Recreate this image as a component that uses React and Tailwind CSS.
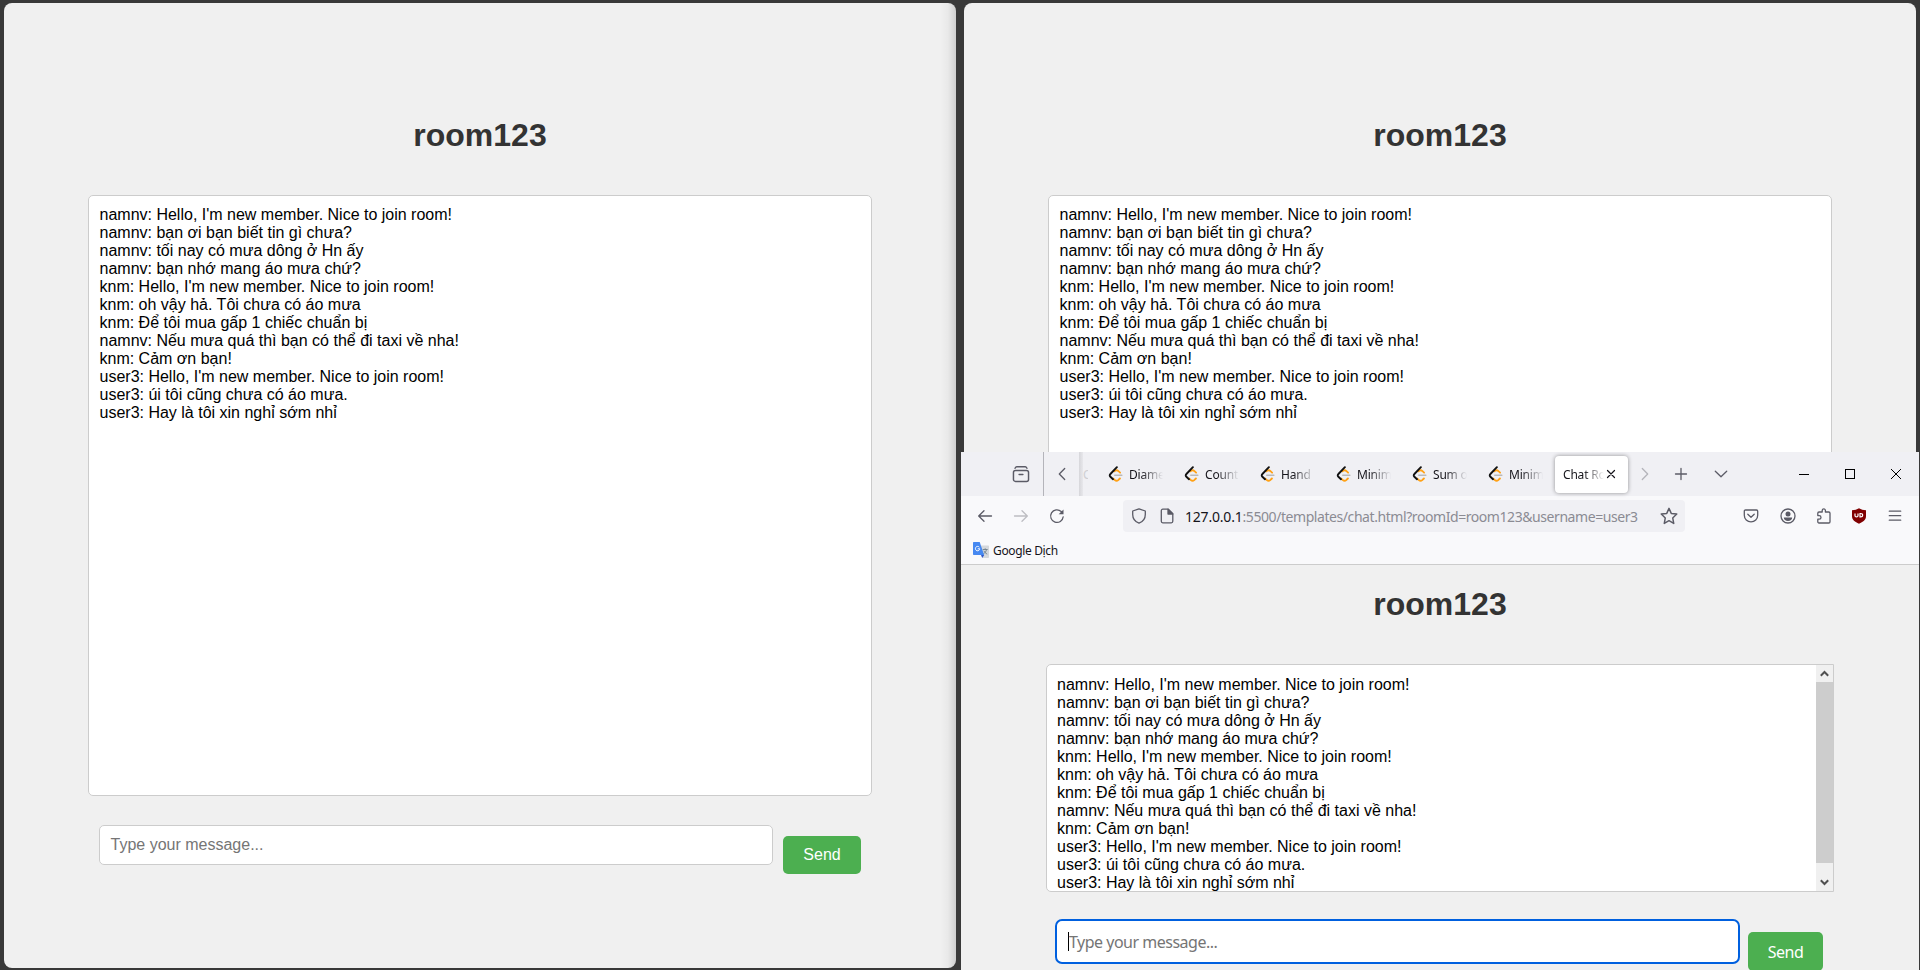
import React from "react";

const MESSAGES = [
  "namnv: Hello, I'm new member. Nice to join room!",
  "namnv: bạn ơi bạn biết tin gì chưa?",
  "namnv: tối nay có mưa dông ở Hn ấy",
  "namnv: bạn nhớ mang áo mưa chứ?",
  "knm: Hello, I'm new member. Nice to join room!",
  "knm: oh vậy hả. Tôi chưa có áo mưa",
  "knm: Để tôi mua gấp 1 chiếc chuẩn bị",
  "namnv: Nếu mưa quá thì bạn có thể đi taxi về nha!",
  "knm: Cảm ơn bạn!",
  "user3: Hello, I'm new member. Nice to join room!",
  "user3: úi tôi cũng chưa có áo mưa.",
  "user3: Hay là tôi xin nghỉ sớm nhỉ",
];

const TABS = ["Diame", "Count", "Hand", "Minim", "Sum o", "Minim"];

function Icon({ size = 16, className = "", children, width = 1.3 }) {
  return (
    <svg
      width={size}
      height={size}
      viewBox="0 0 16 16"
      fill="none"
      stroke="currentColor"
      strokeWidth={width}
      strokeLinecap="round"
      strokeLinejoin="round"
      className={"block shrink-0 " + className}
    >
      {children}
    </svg>
  );
}

function MessageList() {
  return (
    <div className="text-[16px] leading-[18px] text-black">
      {MESSAGES.map((m) => (
        <div key={m} className="whitespace-nowrap">
          {m}
        </div>
      ))}
    </div>
  );
}

function Title() {
  return <h1 className="text-center text-[32px] leading-[36px] font-bold text-[#333]">room123</h1>;
}

function ChatPanel({ shaded }) {
  return (
    <section className="relative h-[965px] w-[952px] overflow-hidden rounded-[8px] bg-[#f0f0f0] px-[84px] pt-[114px]">
      <Title />
      <div className="mt-[42px] h-[601px] rounded-[5px] border border-[#ccc] bg-white px-[10.5px] pt-[10px]">
        <MessageList />
      </div>
      <div className="mt-[29px] flex items-start gap-[10px] px-[11px]">
        <div className="h-[40px] w-[674px] rounded-[5px] border border-[#ccc] bg-white px-[10.5px] text-[16px] leading-[38px] text-[#757575]">
          Type your message...
        </div>
        <button className="mt-[11px] h-[38px] w-[78px] rounded-[5px] bg-[#4caf50] text-[16px] leading-[36px] text-white">
          Send
        </button>
      </div>
      {shaded && (
        <div className="absolute inset-y-0 right-0 w-[16px] bg-linear-to-r from-black/0 via-black/3 to-black/14" />
      )}
    </section>
  );
}

function LeetIcon() {
  return (
    <svg width="16" height="16" viewBox="0 0 16 16" fill="none" className="block shrink-0" strokeLinecap="round">
      <path d="M6.300 5.300 C7.600 4.100 9.300 4.100 10.500 5.200 L12.100 6.700" stroke="#ffa116" strokeWidth="1.800" />
      <path d="M5.300 12.600 L6.900 14.100 C7.900 15 9.200 15 10.200 14.100 L11.900 12.500" stroke="#ffa116" strokeWidth="1.900" />
      <path d="M6.800 9.300 H13.800" stroke="#b9b9b9" strokeWidth="1.600" />
      <path d="M8.900 1.200 L2.400 8 C1.500 8.900 1.500 9.900 2.400 10.800 L5 13.200" stroke="#111" strokeWidth="1.900" />
    </svg>
  );
}

function TabStrip() {
  return (
    <div className="flex h-[44px] items-center bg-[#f0f0f4] text-[#5b5b66]">
      <div className="flex h-full w-[83px] shrink-0 items-center justify-end border-r border-[#b4b4ba] pr-[13px]">
        <Icon size={18}>
          <path d="M2.700 2.900c.4-.8.8-1.400 1.500-1.400h7.600c.7 0 1.100.6 1.500 1.400" />
          <rect x="1.300" y="4.800" width="13.400" height="9.800" rx="1.800" />
          <path d="M6.300 8.400h3.400" />
        </Icon>
      </div>
      <div className="flex h-full w-[35px] shrink-0 items-center justify-center">
        <Icon size={16}>
          <path d="M10.700 2.500 5.300 8l5.400 5.500" />
        </Icon>
      </div>
      <div className="h-full w-[4px] shrink-0 bg-linear-to-r from-[#d6d6da] to-[#e8e8ec]" />
      <div className="w-[25px] shrink-0 pt-[2px] text-[12px] leading-[18px] text-[#cfcfd3]">
        <div className="w-[5px] overflow-hidden">C</div>
      </div>
      {TABS.map((t, i) => (
        <div key={i} className="flex w-[76px] shrink-0 items-center">
          <LeetIcon />
          <div className="ml-[5px] w-[34px] overflow-hidden pt-[2px] text-[12px] leading-[18px] tracking-[-0.2px] whitespace-nowrap text-[#15141a] [mask-image:linear-gradient(to_right,black_35%,transparent)]">
            {t}
          </div>
        </div>
      ))}
      <div className="-ml-[9px] flex h-[37px] w-[73px] shrink-0 items-center rounded-[4px] bg-white pl-[8px] text-[12px] text-[#15141a] shadow-[0_0_4px_rgba(0,0,0,0.4)]">
        <div className="w-[41px] overflow-hidden pt-[2px] leading-[18px] tracking-[-0.2px] whitespace-nowrap [mask-image:linear-gradient(to_right,black_50%,transparent)]">
          Chat Ro
        </div>
        <Icon size={14} width={1.4}>
          <path d="m4 4 8 8m0-8-8 8" />
        </Icon>
      </div>
      <Icon size={16} className="ml-[9px] text-[#b4b4ba]">
        <path d="M5.300 2.500 10.700 8l-5.400 5.500" />
      </Icon>
      <Icon size={16} className="ml-[19.500px]">
        <path d="M8 2.500v11M2.500 8h11" />
      </Icon>
      <Icon size={16} className="ml-[24.500px]">
        <path d="M2.300 5.300 8 10.700l5.700-5.400" />
      </Icon>
      <div className="ml-[70px] h-px w-[10px] shrink-0 bg-black" />
      <div className="ml-[36px] h-[10px] w-[10px] shrink-0 border border-black" />
      <svg width="10" height="10" viewBox="0 0 10 10" className="ml-[36px] block shrink-0 text-black">
        <path d="M0 0 10 10M10 0 0 10" stroke="currentColor" strokeWidth="1" />
      </svg>
    </div>
  );
}

function NavBar() {
  return (
    <div className="flex h-[40px] items-center bg-[#f9f9fb] text-[#5b5b66]">
      <Icon className="ml-[16px]">
        <path d="M14.500 8H2M7 2.700 1.700 8 7 13.300" />
      </Icon>
      <Icon className="ml-[20px] text-[#bdbdc2]">
        <path d="M1.500 8H14M9 2.700 14.300 8 9 13.300" />
      </Icon>
      <Icon className="ml-[20px]">
        <path d="M14.200 8.800a6.300 6.300 0 1 1-2-5.300l1.200 1.200" />
        <path d="M14.500 1.500v4.800H9.700z" fill="currentColor" stroke="none" />
      </Icon>
      <div className="ml-[58px] flex h-[32px] w-[562px] shrink-0 items-center rounded-[4px] bg-[#f0f0f4] pl-[8px]">
        <Icon>
          <path d="M8 .8 14.300 3v3.500c0 4.200-2.600 7.300-6.300 8.700C4.300 13.800 1.700 10.700 1.700 6.500V3z" />
        </Icon>
        <Icon className="ml-[12px]">
          <path d="M3.800 1.200h5.500l4.500 4.500v7.600c0 .9-.6 1.500-1.500 1.500H3.800c-.9 0-1.500-.6-1.500-1.500V2.700c0-.9.600-1.500 1.500-1.500z" />
          <path d="M9 1.200v4.800h4.800z" fill="currentColor" />
        </Icon>
        <div className="ml-[10px] w-[468px] pt-[2px] text-[14px] leading-[20px] tracking-[-0.430px] whitespace-nowrap text-[#8b8b93]">
          <span className="tracking-[-0.2px] text-[#15141a]">127.0.0.1</span>:5500/templates/chat.html?roomId=room123&amp;username=user3
        </div>
        <Icon size={18} className="ml-[7px]">
          <path d="m8 1.200 2 4.500 4.900.6-3.600 3.400.9 4.900L8 12.200l-4.200 2.400.9-4.900L1.100 6.300 6 5.700z" />
        </Icon>
      </div>
      <Icon className="ml-[58px]">
        <path d="M2.500 2h11c.6 0 1.200.5 1.200 1.200v4a6.700 6.700 0 0 1-13.400 0v-4C1.300 2.500 1.900 2 2.500 2z" />
        <path d="M4.800 6.300 8 9.300l3.200-3" />
      </Icon>
      <Icon className="ml-[21px]">
        <circle cx="8" cy="8" r="7" />
        <circle cx="8" cy="6" r="2.500" fill="currentColor" stroke="none" />
        <path d="M3.800 9.500h8.400c0 2-1.800 3.500-4.200 3.500s-4.200-1.500-4.200-3.500z" fill="currentColor" stroke="none" />
      </Icon>
      <Icon className="ml-[20px]">
        <path d="M6.200 4V2.500a1.600 1.600 0 0 1 3.200 0V4h3.400c.8 0 1.200.5 1.200 1.200v8.600c0 .7-.5 1.200-1.200 1.200H3c-.7 0-1.200-.5-1.200-1.200v-2.600h1.400a1.800 1.800 0 0 0 0-3.600H1.800V5.200C1.800 4.500 2.300 4 3 4z" />
      </Icon>
      <svg width="16" height="16" viewBox="0 0 16 16" className="ml-[19px] block shrink-0">
        <path d="M8 .300c2 1.300 4.300 1.900 7 1.900v6c0 3.600-3 5.800-7 7.500-4-1.700-7-3.900-7-7.500v-6C3.700 2.200 6 1.600 8 .3z" fill="#800000" />
        <path d="M4 5.500v2.300c0 1.500 3 1.500 3 0V5.500M9 5.500v3.400h.8c2.500 0 2.500-3.400 0-3.400z" fill="none" stroke="#fff" strokeWidth="1.200" />
      </svg>
      <Icon className="ml-[20px]">
        <path d="M2.300 3.200h11.400M2.300 7.700h11.400M2.300 12.200h11.400" />
      </Icon>
    </div>
  );
}

function BookmarkBar() {
  return (
    <div className="flex h-[29px] items-start border-b border-[#ccc] bg-[#f9f9fb] pt-[5px] pl-[12px] text-[12px] leading-[18px] text-[#15141a]">
      <svg width="16" height="16" viewBox="0 0 16 16" className="mt-px block shrink-0">
        <path d="M6.500 3.500H15c.6 0 1 .4 1 1V15c0 .6-.4 1-1 1H9.700z" fill="#d5d8dc" />
        <path d="M9.700 7.500h5M12.200 6.300v1.200m1.300 0c-.3 2-1.800 3.800-3.200 4.500m.5-3.200c.7 1.500 2 2.700 3.400 3.400" stroke="#70808a" strokeWidth=".9" fill="none" />
        <path d="M8 13h3.200L9.200 16z" fill="#3058c8" />
        <path d="M1 0h5.700l4.400 13H1c-.6 0-1-.4-1-1V1c0-.6.400-1 1-1z" fill="#4688f1" />
        <path d="M6.300 5.200a2.200 2.200 0 1 0 .5 1.600H4.700" stroke="#fff" strokeWidth="1" fill="none" />
      </svg>
      <span className="ml-[4px] pt-px tracking-[-0.35px]">Google Dịch</span>
    </div>
  );
}

function ScrollArrow({ down }) {
  return (
    <div className="flex h-[17px] w-[16px] items-center justify-center text-[#505050]">
      <svg width="9" height="7" viewBox="0 0 9 7" fill="none" stroke="currentColor" strokeWidth="2">
        <path d={down ? "M.800 1.300 4.500 5 8.200 1.300" : "M.800 5.700 4.500 2 8.200 5.700"} />
      </svg>
    </div>
  );
}

function BrowserWindow() {
  return (
    <section className="absolute top-[452px] left-[961px] h-[518px] w-[958px] overflow-hidden bg-[#f0f0f0]">
      <div className="font-['Noto_Sans','Open_Sans',sans-serif]">
        <TabStrip />
        <NavBar />
        <BookmarkBar />
      </div>
      <div className="pt-[21px] pr-[85px] pl-[85px]">
        <Title />
        <div className="mt-[42px] flex h-[228px] justify-between overflow-hidden rounded-l-[5px] border border-[#ccc] bg-white">
          <div className="pt-[11px] pl-[10px]">
            <MessageList />
          </div>
          <div className="flex w-[17px] shrink-0 flex-col bg-[#f0f0f0]">
            <ScrollArrow />
            <div className="h-[181px] bg-[#cdcdcd]" />
            <div className="mt-[11px]">
              <ScrollArrow down />
            </div>
          </div>
        </div>
        <div className="mt-[27px] flex items-start gap-[8px] pl-[9px] font-['Noto_Sans','Open_Sans',sans-serif]">
          <div className="flex h-[45px] w-[685px] shrink-0 items-center rounded-[7px] border-2 border-[#0060df] bg-white pl-[11px] text-[16px] text-[#757575]">
            <div className="h-[19px] w-px bg-black" />
            <span className="tracking-[-0.5px]">Type your message...</span>
          </div>
          <button className="mt-[13px] h-[39px] w-[75px] shrink-0 rounded-[5px] bg-[#4caf50] text-[16px] tracking-[-0.5px] text-white">
            Send
          </button>
        </div>
      </div>
    </section>
  );
}

export default function App() {
  return (
    <main className="relative flex h-[970px] w-[1920px] gap-[8px] overflow-hidden bg-[#393939] px-[4px] pt-[3px] font-['Liberation_Sans',Arial,sans-serif]">
      <ChatPanel shaded />
      <ChatPanel />
      <BrowserWindow />
    </main>
  );
}
